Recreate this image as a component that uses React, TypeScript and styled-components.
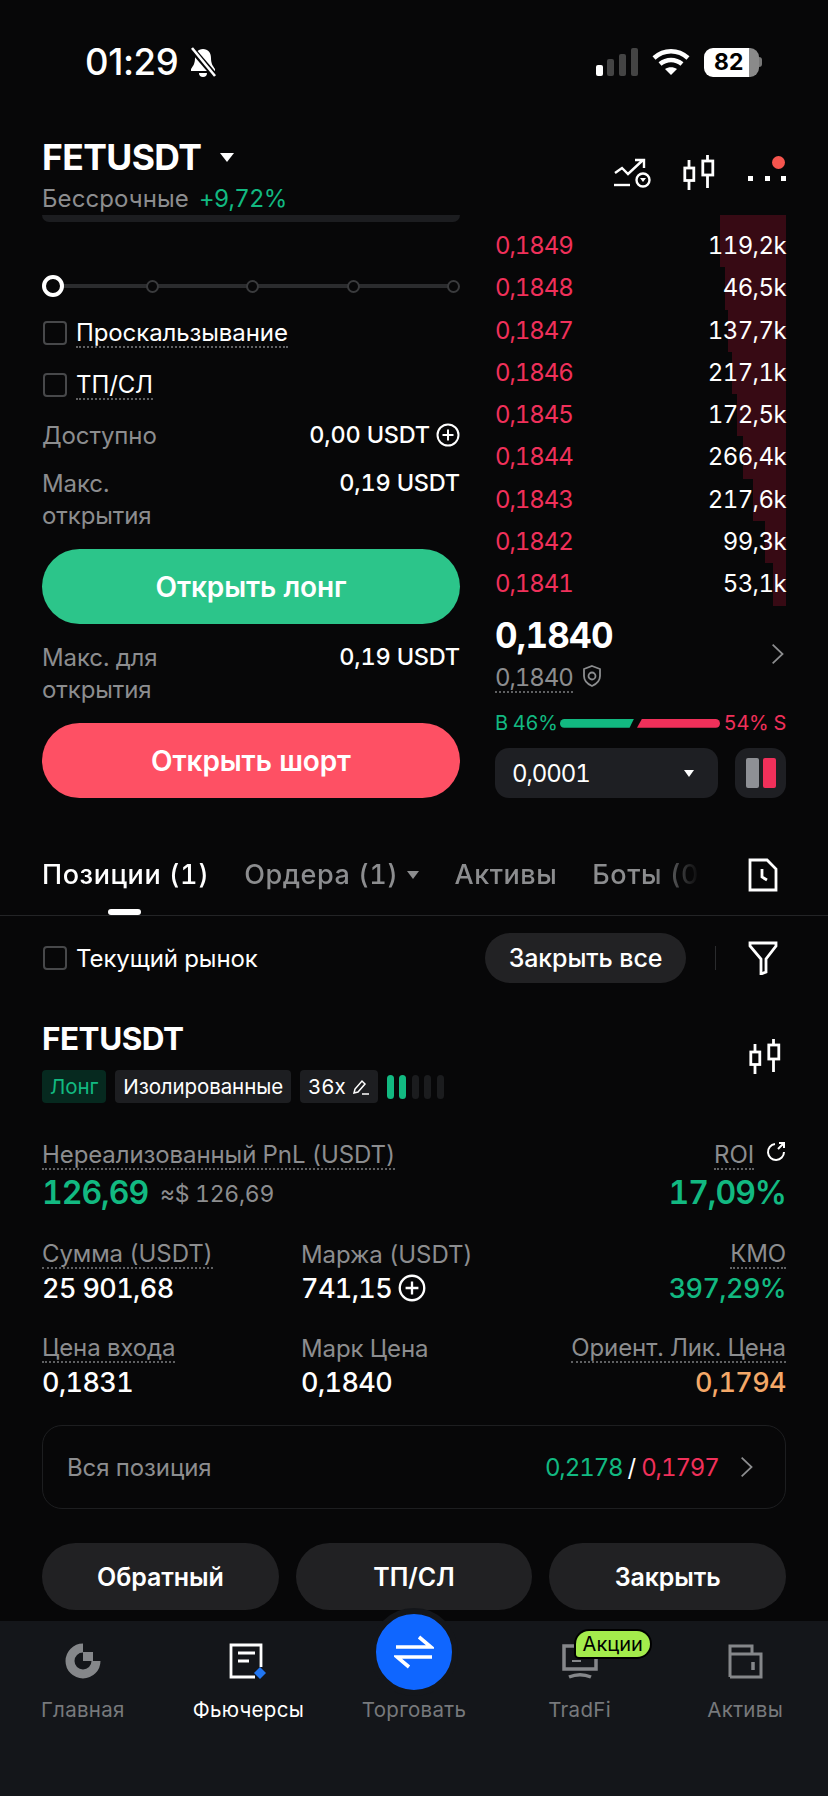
import React from 'react';
import styled, { createGlobalStyle } from 'styled-components';

const Global = createGlobalStyle`
  html, body { margin: 0; padding: 0; background: #070708; }
  * { box-sizing: border-box; }
`;

const green = '#12b981';
const red = '#f0305a';
const gray = '#8c8d8f';

const Page = styled.div`
  width: 828px; height: 1796px; background: #070708; color: #fff; overflow: hidden;
  display: flex; flex-direction: column;
  font-family: Inter, "Liberation Sans", sans-serif; font-size: 24px; letter-spacing: -0.1px; font-variant-numeric: tabular-nums;
`;
const StatusBar = styled.div`
  height: 124px; padding: 42px 66px 0 85px; display: flex; justify-content: space-between; align-items: flex-start;
`;
const StatusLeft = styled.div`display: flex; align-items: center; gap: 10px; height: 40px;`;
const Time = styled.span`font-size: 36.5px; font-weight: 500; letter-spacing: -0.4px; font-variant-numeric: normal;`;
const StatusRight = styled.div`display: flex; align-items: center; gap: 14px; height: 40px;`;
const Battery = styled.div`
  width: 55px; height: 29px; border-radius: 9px; color: #000; font-size: 23px; font-weight: 700; line-height: 29px;
  padding-left: 10px; background: linear-gradient(90deg, #fff 0 45px, #8a8a8a 45px);
`;
const BatteryTip = styled.div`width: 3px; height: 10px; background: #777; border-radius: 0 3px 3px 0; margin-left: -14px;`;

const Header = styled.div`height: 91px; padding: 0 42px; display: flex; justify-content: space-between; align-items: flex-start;`;
const TitleBlock = styled.div`display: flex; flex-direction: column;`;
const TitleRow = styled.div`display: flex; align-items: center; gap: 19px; height: 66px;`;
const Title = styled.span`font-size: 35.5px; font-weight: 700; letter-spacing: -0.6px;`;
const SubRow = styled.div`display: flex; gap: 10px; line-height: 30px; color: ${gray}; margin-top: -6px; letter-spacing: 0.1px;`;
const Up = styled.span`color: ${green}; letter-spacing: -0.8px;`;
const HeadIcons = styled.div`display: flex; align-items: center; gap: 32px; padding-top: 31px;`;
const Dots = styled.div`position: relative; width: 38px; height: 34px; display: flex; justify-content: space-between; align-items: flex-end; padding-bottom: 9px;`;
const Dot = styled.i`display: block; width: 5px; height: 5px; background: #fff;`;
const RedDot = styled.i`position: absolute; top: 0; right: 1px; width: 13px; height: 13px; border-radius: 50%; background: #f5554e;`;

const Trade = styled.div`display: flex; justify-content: space-between; padding: 0 42px; height: 583px;`;
const LeftCol = styled.div`width: 418px; display: flex; flex-direction: column;`;
const Remnant = styled.div`height: 7px; background: #1c1d20; border-radius: 0 0 10px 10px;`;
const Slider = styled.div`position: relative; margin: 52px 0 9px; height: 24px; display: flex; align-items: center; justify-content: space-between;`;
const SliderLine = styled.div`position: absolute; left: 10px; right: 4px; top: 10px; height: 4px; background: #2b2c2e;`;
const Handle = styled.i`position: relative; display: block; width: 22px; height: 22px; border-radius: 50%; background: #070708; border: 4px solid #fff; margin-right: -6px;`;
const Stop = styled.i`position: relative; display: block; width: 13px; height: 13px; border-radius: 50%; background: #070708; border: 2px solid #3a3b3d;`;
const CheckRow = styled.div`height: 52px; display: flex; align-items: center; gap: 9px;`;
const Check = styled.i`display: block; flex: none; width: 24px; height: 24px; border-radius: 4px; border: 2px solid #47484a; margin-left: 1px;`;
const Dotted = styled.span<{ $tight?: boolean }>`display: inline-block; line-height: 27px; border-bottom: 2px dotted #5f6062; ${p => p.$tight && 'letter-spacing: -1.1px;'}`;
const InfoRow = styled.div<{ $top: number }>`
  margin-top: ${p => p.$top}px; display: flex; justify-content: space-between; align-items: flex-start; line-height: 32px;
`;
const InfoLabel = styled.span<{ $w: number }>`color: ${gray}; width: ${p => p.$w}px;`;
const InfoValue = styled.span`display: flex; align-items: center; gap: 6px; font-weight: 500; font-size: 23.5px; line-height: 30px; letter-spacing: -0.2px;`;
const BigBtn = styled.div<{ $bg: string }>`
  margin-top: 17px; height: 75px; border-radius: 38px; background: ${p => p.$bg}; display: flex; align-items: center; justify-content: center;
  font-size: 28px; font-weight: 600;
`;

const Book = styled.div`width: 291px; display: flex; flex-direction: column;`;
const Row = styled.div<{ $first?: boolean }>`
  position: relative; display: flex; justify-content: space-between; height: ${p => (p.$first ? 53 : 42.3)}px;
  padding-top: ${p => (p.$first ? 10 : 0)}px; line-height: 42.3px;
`;
const Depth = styled.i`position: absolute; right: 0; top: 0; bottom: 0; background: #370a14;`;
const Price = styled.span`position: relative; color: ${red}; letter-spacing: -1.1px;`;
const Qty = styled.span`position: relative; letter-spacing: -0.6px;`;
const Mid = styled.div`display: flex; justify-content: space-between; align-items: center; margin-top: 4px; padding-right: 2px;`;
const MidPrice = styled.div`font-size: 35px; font-weight: 700; line-height: 50px; letter-spacing: -0.8px; margin-bottom: 4px;`;
const Mark = styled.div`display: flex; align-items: flex-start; gap: 9px; color: ${gray}; height: 34px;`;
const Ratio = styled.div`display: flex; align-items: center; font-size: 20px; line-height: 28px; margin-top: 11.5px; letter-spacing: -0.3px;`;
const Buy = styled.span`color: ${green}; width: 65px;`;
const Sell = styled.span`color: ${red}; margin-left: auto;`;
const BarG = styled.i`display: block; width: 74px; height: 9px; background: ${green}; border-radius: 5px 0 0 5px; clip-path: polygon(0 0,100% 0,94% 100%,0 100%);`;
const BarR = styled.i`display: block; width: 83px; height: 9px; margin-left: 3px; background: ${red}; border-radius: 0 5px 5px 0; clip-path: polygon(6% 0,100% 0,100% 100%,0 100%);`;
const BookControls = styled.div`display: flex; justify-content: space-between; margin-top: 11px;`;
const Select = styled.div`width: 223px; height: 50px; border-radius: 14px; background: #1e1f23; display: flex; align-items: center; justify-content: space-between; padding: 0 24px 0 17px; letter-spacing: -1.1px;`;
const Toggle = styled.div`width: 51px; height: 50px; border-radius: 14px; background: #1e1f23; display: flex; align-items: center; justify-content: center; gap: 4px;`;
const ToggleBar = styled.i<{ $c: string }>`display: block; width: 13px; height: 30px; border-radius: 2px; background: ${p => p.$c};`;
const Tri = styled.i<{ $c?: string; $s?: number }>`
  display: inline-block; width: 0; height: 0; border-left: ${p => p.$s ?? 7}px solid transparent; border-right: ${p => p.$s ?? 7}px solid transparent;
  border-top: ${p => (p.$s ?? 7) * 1.4}px solid ${p => p.$c ?? '#fff'};
`;

const Tabs = styled.div`margin-top: 47px; height: 71px; border-bottom: 1px solid #232426; padding: 0 50px 0 42px; display: flex; justify-content: space-between;`;
const TabList = styled.div`
  width: 658px; display: flex; gap: 35px; overflow: hidden; line-height: 60px; font-size: 27px; font-weight: 500; letter-spacing: 0.55px; color: ${gray}; white-space: nowrap;
  mask-image: linear-gradient(90deg, #000 610px, transparent 658px);
`;
const Tab = styled.div<{ $on?: boolean }>`
  display: flex; align-items: center; gap: 9px; position: relative; height: 71px; padding-bottom: 11px; color: ${p => (p.$on ? '#fff' : gray)};
  ${p => p.$on && `&::after{content:'';position:absolute;left:66px;width:33px;height:6px;bottom:1px;background:#fff;border-radius:3px;}`}
`;
const TabIcon = styled.div`padding-top: 13px;`;

const Toolbar = styled.div`padding: 17px 50px 0 42px; display: flex; align-items: center;`;
const CurMarket = styled.div`display: flex; align-items: center; gap: 9px; flex: 1;`;
const Pill = styled.div`width: 201px; height: 50px; border-radius: 25px; background: #222224; font-size: 25px; font-weight: 500; display: flex; align-items: center; justify-content: center;`;
const VLine = styled.i`display: block; width: 1px; height: 24px; background: #2a2b2d; margin: 0 32px 0 29px;`;

const PosHead = styled.div`margin-top: 36px; padding: 0 46px 0 42px; display: flex; justify-content: space-between;`;
const PosTitle = styled.div`font-size: 31.5px; font-weight: 700; line-height: 40px; letter-spacing: -0.5px;`;
const Tags = styled.div`display: flex; gap: 9px; margin-top: 11px; align-items: center;`;
const Tag = styled.div<{ $long?: boolean }>`
  height: 33px; padding: 0 8px; border-radius: 4px; font-size: 20.5px; line-height: 33px; display: flex; align-items: center; gap: 6px;
  background: ${p => (p.$long ? '#06291f' : '#1d1e21')}; color: ${p => (p.$long ? green : '#fff')};
`;
const Signal = styled.div`display: flex; gap: 5.5px;`;
const SigBar = styled.i<{ $on?: boolean }>`display: block; width: 7px; height: 24px; border-radius: 4px; background: ${p => (p.$on ? green : '#1b1c1e')};`;
const CandleWrap = styled.div`padding-top: 20px;`;

const Stats = styled.div<{ $top: number }>`
  margin-top: ${p => p.$top}px; padding: 0 42px; display: grid; grid-template-columns: 259px 1fr auto;
`;
const StatLabelBox = styled.div<{ $right?: boolean }>`height: 30px; padding-top: 1px; color: ${gray}; display: flex; gap: 12px; align-items: flex-start; ${p => p.$right && 'justify-content: flex-end;'}`;
const StatVal = styled.div<{ $c?: string; $right?: boolean; $big?: boolean }>`
  display: flex; align-items: center; gap: 6px; white-space: nowrap;
  height: ${p => (p.$big ? 44 : 38)}px; font-size: ${p => (p.$big ? 32 : 27)}px; font-weight: ${p => (p.$big ? 600 : 500)};
  letter-spacing: ${p => (p.$big ? -1 : -0.6)}px;
  color: ${p => p.$c ?? '#fff'}; ${p => p.$right && 'justify-content: flex-end;'}
`;
const Wide = styled.div`grid-column: span 2;`;
const Approx = styled.span`font-size: 23px; color: ${gray}; font-weight: 400; margin-left: 6px; padding-top: 3px; letter-spacing: -0.3px;`;
const Card = styled.div`
  margin: 24px 42px 0; height: 84px; border: 1px solid #1d1e20; border-radius: 20px; padding: 0 32px 0 24px; display: flex; align-items: center; justify-content: space-between; color: ${gray};
`;
const CardVal = styled.div`display: flex; align-items: center; gap: 5px;`;
const CardUp = styled.span`color: ${green}; letter-spacing: -1.1px;`;
const Slash = styled.span`color: #fff;`;
const CardGap = styled.span`width: 11px;`;
const Actions = styled.div`margin: 34px 42px 0; display: grid; grid-template-columns: 1fr 1fr 1fr; gap: 17px;`;
const Action = styled.div`height: 67px; border-radius: 34px; background: #212123; font-size: 25px; font-weight: 600; display: flex; align-items: center; justify-content: center;`;

const Nav = styled.div`position: relative; margin-top: 11px; flex: 1; background: #14161a; display: grid; grid-template-columns: repeat(5, 1fr);`;
const NavItem = styled.div<{ $on?: boolean }>`display: flex; flex-direction: column; align-items: center; position: relative; color: ${p => (p.$on ? '#fff' : '#77797c')}; font-size: 20.5px; letter-spacing: 0.3px;`;
const NavIcon = styled.div`height: 58px; margin-bottom: 18px; display: flex; align-items: flex-end;`;
const NavText = styled.div`line-height: 26px;`;
const Fab = styled.div`
  position: absolute; top: -13px; left: 50%; margin-left: -44px; width: 88px; height: 88px; border-radius: 50%; background: #0f66ff; border: 6px solid #14161a;
  display: flex; align-items: center; justify-content: center;
`;
const Spacer = styled.div`height: 76px;`;
const Badge = styled.div`
  position: absolute; top: 10px; left: 50%; margin-left: -4px; height: 26px; padding: 0 7px; border-radius: 13px 13px 13px 3px; background: #a4ec4c; color: #000; font-size: 20px; line-height: 26px; letter-spacing: 0;
  box-shadow: 0 0 0 2px #000;
`;

const Candle = () => (
  <svg width="33" height="36" viewBox="0 0 32 36" fill="none" stroke="#fff" strokeWidth="2.8">
    <path d="M5.5 5v30M24 0v33" />
    <rect x="1.3" y="13" width="9" height="12.5" fill="#070708" />
    <rect x="19.3" y="6" width="10" height="14" fill="#070708" />
  </svg>
);
const Plus = ({ s = 24 }: { s?: number }) => (
  <svg width={s} height={s} viewBox="0 0 24 24" fill="none" stroke="#fff" strokeWidth="2">
    <circle cx="12" cy="12" r="10.5" />
    <path d="M12 6.5v11M6.5 12h11" />
  </svg>
);
const Chev = ({ c = gray, s = 22 }: { c?: string; s?: number }) => (
  <svg width={s * 0.6} height={s} viewBox="0 0 12 20" fill="none" stroke={c} strokeWidth="1.6"><path d="M1.5 1.5 10.5 10l-9 8.5" /></svg>
);

const book: [string, string, number][] = [
  ['0,1849', '119,2k', 66], ['0,1848', '46,5k', 61], ['0,1847', '137,7k', 58], ['0,1846', '217,1k', 54], ['0,1845', '172,5k', 49],
  ['0,1844', '266,4k', 43], ['0,1843', '217,6k', 33], ['0,1842', '99,3k', 21], ['0,1841', '53,1k', 13],
];

export default function App() {
  return (
    <Page>
      <Global />
      <StatusBar>
        <StatusLeft>
          <Time>01:29</Time>
          <svg width="30" height="32" viewBox="0 0 30 32">
            <path d="M15 3c-5 0-8 3.500-8 9 0 6-2 8-4 11v2h24v-2c-2-3-4-5-4-11 0-5.500-3-9-8-9z" fill="#fff" />
            <path d="M11 27h8c0 2.500-1.500 4-4 4s-4-1.500-4-4z" fill="#fff" />
            <path d="M3 2l25 29" stroke="#070708" strokeWidth="6" />
            <path d="M4 2l23 28" stroke="#fff" strokeWidth="2.600" />
          </svg>
        </StatusLeft>
        <StatusRight>
          <svg width="42" height="28" viewBox="0 0 42 28">
            <rect x="0" y="17" width="7" height="11" rx="2" fill="#fff" />
            <rect x="11" y="11" width="7" height="17" rx="2" fill="#444" />
            <rect x="23" y="6" width="7" height="22" rx="2" fill="#444" />
            <rect x="35" y="0" width="7" height="28" rx="2" fill="#444" />
          </svg>
          <svg width="38" height="28" viewBox="0 0 38 28" fill="none" stroke="#fff" strokeWidth="4.500">
            <path d="M2 10c10-9 24-9 34 0M8 16c6.500-5.500 15.500-5.500 22 0" />
            <path d="M19 27l-6-6c3.500-2.500 8.500-2.500 12 0z" fill="#fff" stroke="none" />
          </svg>
          <Battery>82</Battery>
          <BatteryTip />
        </StatusRight>
      </StatusBar>

      <Header>
        <TitleBlock>
          <TitleRow><Title>FETUSDT</Title><Tri $s={7} /></TitleRow>
          <SubRow><span>Бессрочные</span><Up>+9,72%</Up></SubRow>
        </TitleBlock>
        <HeadIcons>
          <svg width="37" height="30" viewBox="0 0 37 30" fill="none" stroke="#fff" strokeWidth="2.400">
            <path d="M1 15l7-5 6 6 15-14M21 2h9v8" />
            <path d="M0 27h16" />
            <circle cx="29" cy="22" r="6.500" fill="#070708" />
            <path d="M26 20h6l-3 4z" fill="#fff" stroke="none" />
          </svg>
          <Candle />
          <Dots><Dot /><Dot /><Dot /><RedDot /></Dots>
        </HeadIcons>
      </Header>

      <Trade>
        <LeftCol>
          <Remnant />
          <Slider>
            <SliderLine />
            <Handle /><Stop /><Stop /><Stop /><Stop />
          </Slider>
          <CheckRow><Check /><Dotted>Проскальзывание</Dotted></CheckRow>
          <CheckRow><Check /><Dotted>ТП/СЛ</Dotted></CheckRow>
          <InfoRow $top={9}>
            <InfoLabel $w={180}>Доступно</InfoLabel>
            <InfoValue>0,00 USDT <Plus /></InfoValue>
          </InfoRow>
          <InfoRow $top={16}>
            <InfoLabel $w={120}>Макс. открытия</InfoLabel>
            <InfoValue>0,19 USDT</InfoValue>
          </InfoRow>
          <BigBtn $bg="#2cc58a">Открыть лонг</BigBtn>
          <InfoRow $top={18}>
            <InfoLabel $w={180}>Макс. для открытия</InfoLabel>
            <InfoValue>0,19 USDT</InfoValue>
          </InfoRow>
          <BigBtn $bg="#fe5064">Открыть шорт</BigBtn>
        </LeftCol>
        <Book>
          {book.map(([p, q, w], i) => (
            <Row key={p} $first={i === 0}>
              <Depth style={{ width: w }} />
              <Price>{p}</Price>
              <Qty>{q}</Qty>
            </Row>
          ))}
          <Mid>
            <div>
              <MidPrice>0,1840</MidPrice>
              <Mark>
                <Dotted $tight>0,1840</Dotted>
                <svg width="20" height="24" viewBox="0 0 20 24" fill="none" stroke={gray} strokeWidth="1.800">
                  <path d="M10 2l8 3v7c0 5-3.500 8-8 10-4.500-2-8-5-8-10V5z" />
                  <circle cx="10" cy="12" r="3.500" />
                </svg>
              </Mark>
            </div>
            <Chev />
          </Mid>
          <Ratio><Buy>В 46%</Buy><BarG /><BarR /><Sell>54% S</Sell></Ratio>
          <BookControls>
            <Select><span>0,0001</span><Tri $s={5} /></Select>
            <Toggle><ToggleBar $c="#8e9095" /><ToggleBar $c={red} /></Toggle>
          </BookControls>
        </Book>
      </Trade>

      <Tabs>
        <TabList>
          <Tab $on>Позиции (1)</Tab>
          <Tab>Ордера (1) <Tri $c={gray} $s={6} /></Tab>
          <Tab>Активы</Tab>
          <Tab>Боты (0)</Tab>
        </TabList>
        <TabIcon>
          <svg width="30" height="34" viewBox="0 0 30 34" fill="none" stroke="#fff" strokeWidth="2.800">
            <path d="M2 2h17l9 9v21H2z" />
            <path d="M14 11v8l5 3" />
          </svg>
        </TabIcon>
      </Tabs>

      <Toolbar>
        <CurMarket><Check /><span>Текущий рынок</span></CurMarket>
        <Pill>Закрыть все</Pill>
        <VLine />
        <svg width="30" height="34" viewBox="0 0 30 34" fill="none" stroke="#fff" strokeWidth="2.800">
          <path d="M2 2h26v3L18 18v13l-5 2V18L2 5z" />
        </svg>
      </Toolbar>

      <PosHead>
        <div>
          <PosTitle>FETUSDT</PosTitle>
          <Tags>
            <Tag $long>Лонг</Tag>
            <Tag>Изолированные</Tag>
            <Tag>36x
              <svg width="18" height="18" viewBox="0 0 18 18" fill="none" stroke="#fff" strokeWidth="1.500">
                <path d="M2 15l1-4 7-8 3 3-7 8zM10 16h7" />
              </svg>
            </Tag>
            <Signal><SigBar $on /><SigBar $on /><SigBar /><SigBar /><SigBar /></Signal>
          </Tags>
        </div>
        <CandleWrap><Candle /></CandleWrap>
      </PosHead>

      <Stats $top={37}>
        <Wide>
          <StatLabelBox><Dotted>Нереализованный PnL (USDT)</Dotted></StatLabelBox>
          <StatVal $big $c={green}>126,69<Approx>≈$ 126,69</Approx></StatVal>
        </Wide>
        <div>
          <StatLabelBox $right>
            <Dotted>ROI</Dotted>
            <svg width="20" height="22" viewBox="0 0 20 22" fill="none" stroke="#fff" strokeWidth="2">
              <path d="M9 3a8 8 0 1 0 9 8M13 2h5v5M18 2l-6 6" />
            </svg>
          </StatLabelBox>
          <StatVal $big $right $c={green}>17,09%</StatVal>
        </div>
      </Stats>
      <Stats $top={25}>
        <div>
          <StatLabelBox><Dotted>Сумма (USDT)</Dotted></StatLabelBox>
          <StatVal>25 901,68</StatVal>
        </div>
        <div>
          <StatLabelBox>Маржа (USDT)</StatLabelBox>
          <StatVal>741,15 <Plus s={28} /></StatVal>
        </div>
        <div>
          <StatLabelBox $right><Dotted>КМО</Dotted></StatLabelBox>
          <StatVal $right $c={green}>397,29%</StatVal>
        </div>
      </Stats>
      <Stats $top={26}>
        <div>
          <StatLabelBox><Dotted>Цена входа</Dotted></StatLabelBox>
          <StatVal>0,1831</StatVal>
        </div>
        <div>
          <StatLabelBox>Марк Цена</StatLabelBox>
          <StatVal>0,1840</StatVal>
        </div>
        <div>
          <StatLabelBox $right><Dotted>Ориент. Лик. Цена</Dotted></StatLabelBox>
          <StatVal $right $c="#f4a868">0,1794</StatVal>
        </div>
      </Stats>

      <Card>
        <span>Вся позиция</span>
        <CardVal>
          <CardUp>0,2178</CardUp><Slash>/</Slash><Price>0,1797</Price>
          <CardGap /><Chev />
        </CardVal>
      </Card>

      <Actions>
        <Action>Обратный</Action>
        <Action>ТП/СЛ</Action>
        <Action>Закрыть</Action>
      </Actions>

      <Nav>
        <NavItem>
          <NavIcon>
            <svg width="36" height="36" viewBox="0 0 36 36">
              <path d="M18 5A13 13 0 1 0 31 18" fill="none" stroke="#85878a" strokeWidth="9" />
              <rect x="18" y="9" width="10" height="9" fill="#85878a" />
            </svg>
          </NavIcon>
          <NavText>Главная</NavText>
        </NavItem>
        <NavItem $on>
          <NavIcon>
            <svg width="38" height="36" viewBox="0 0 38 36" fill="none" stroke="#fff" strokeWidth="2.800">
              <path d="M32 24V2H2v32h24" />
              <path d="M9 10h17M9 18h11" />
              <path d="M31 24l6 6-6 6-6-6z" fill="#2176f2" stroke="none" />
            </svg>
          </NavIcon>
          <NavText>Фьючерсы</NavText>
        </NavItem>
        <NavItem>
          <Spacer />
          <Fab>
            <svg width="40" height="34" viewBox="0 0 40 34" fill="none" stroke="#fff" strokeWidth="3.600">
              <path d="M2 12h35L25 2M38 22H3l12 10" />
            </svg>
          </Fab>
          <NavText>Торговать</NavText>
        </NavItem>
        <NavItem>
          <NavIcon>
            <svg width="38" height="36" viewBox="0 0 38 36" fill="none" stroke="#85878a" strokeWidth="3.500">
              <path d="M3 3h32v23H3z" />
              <path d="M8 34c7-3 15-3 22 0" />
              <path d="M11 18h9" strokeWidth="2" />
            </svg>
          </NavIcon>
          <Badge>Акции</Badge>
          <NavText>TradFi</NavText>
        </NavItem>
        <NavItem>
          <NavIcon>
            <svg width="36" height="36" viewBox="0 0 36 36" fill="none" stroke="#85878a" strokeWidth="3">
              <path d="M3 34V3h22v8" />
              <path d="M3 11h31v23H3" />
              <path d="M26 19v8" strokeWidth="3.500" />
            </svg>
          </NavIcon>
          <NavText>Активы</NavText>
        </NavItem>
      </Nav>
    </Page>
  );
}
